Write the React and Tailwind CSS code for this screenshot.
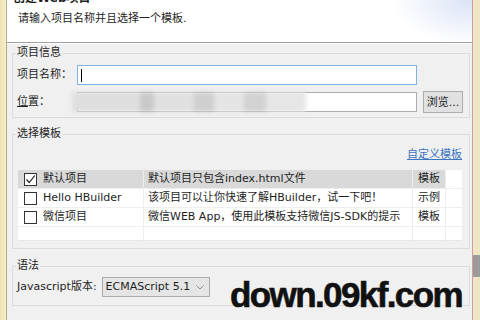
import React from "react";

const rows = [
  { checked: true, name: "默认项目", desc: "默认项目只包含index.html文件", type: "模板", selected: true },
  { checked: false, name: "Hello HBuilder", desc: "该项目可以让你快速了解HBuilder，试一下吧！", type: "示例" },
  { checked: false, name: "微信项目", desc: "微信WEB App，使用此模板支持微信JS-SDK的提示", type: "模板" },
];

const Checkbox = ({ checked }) => (
  <span className="w-[13px] h-[13px] border border-[#333] bg-white flex items-center justify-center shrink-0">
    {checked && (
      <svg width="11" height="11" viewBox="0 0 11 11">
        <path d="M1.5 5.5 L4.2 8.5 L9.8 1.5" fill="none" stroke="#222" strokeWidth="1.2" />
      </svg>
    )}
  </span>
);

const Group = ({ title, className = "", children }) => (
  <fieldset className={`border border-[#dcdcdc] mx-[5px] mr-[2px] ${className}`}>
    <legend className="ml-[3px] px-[1px] leading-[16px] text-[#1e1e1e]">{title}</legend>
    {children}
  </fieldset>
);

export default function App() {
  return (
    <div className="w-[480px] h-[320px] overflow-hidden relative flex bg-[#f0e6bf] text-[11px] text-[#1e1e1e] font-['DejaVu_Sans','Noto_Sans_CJK_SC',sans-serif]">
      {/* left window edge */}
      <div className="w-[7px] bg-[linear-gradient(to_right,#efe2ae,#f6efd2)] border-r border-[#b9ab86]" />

      {/* dialog */}
      <div className="w-[466px] flex flex-col bg-[#f0f0f0] border-r border-[#d39b9b]">
        <div className="h-[43px] shrink-0 bg-[radial-gradient(ellipse_80px_45px_at_100%_0%,#d9e2f6,#ffffff)] border-b border-[#a0a0a0]">
          <div className="mt-[-10px] ml-[6px] font-bold text-[12px] leading-[16px]">创建Web项目</div>
          <div className="mt-[5px] ml-[11px] leading-[16px]">请输入项目名称并且选择一个模板.</div>
        </div>
        <div className="h-px bg-white" />

        <Group title="项目信息" className="mt-[1px] pb-[4px]">
          <div className="grid grid-cols-[54px_340px_40px] gap-x-[6px] pl-[4px] items-center">
            <span className="mt-[4px] whitespace-nowrap">项目名称：</span>
            <div className="mt-[4px] h-[20px] bg-white border border-[#7db2e6] flex items-center pl-[3px]">
              <span className="w-px h-[13px] bg-black" />
            </div>
            <span />
            <span className="mt-[6px] whitespace-nowrap">
              <span className="underline">位</span>置：
            </span>
            <div className="mt-[6px] h-[20px] bg-white border border-[#acacac] flex items-center">
              <div className="relative -ml-[6px] w-[234px] h-[20px] flex blur-[2px]">
                <span className="flex-1 bg-[#dedede]" />
                <span className="w-[14px] bg-[#c9c9c9]" />
                <span className="w-[40px] bg-[#e0e0e0]" />
                <span className="w-[20px] bg-[#cfcfcf]" />
                <span className="w-[30px] bg-[#e4e4e4]" />
                <span className="w-[22px] bg-[#d2d2d2]" />
                <span className="w-[40px] bg-[#e6e6e6]" />
              </div>
            </div>
            <button className="mt-[6px] h-[22px] bg-[#e1e1e1] border border-[#adadad] text-[11px] leading-none">浏览...</button>
          </div>
        </Group>

        <Group title="选择模板" className="mt-[8px] pb-[7px]">
          <div className="mt-[6px] pr-[7px] flex justify-end leading-[14px]">
            <span className="text-[#3d75c0] underline">自定义模板</span>
          </div>
          <div className="mt-[8px] ml-[5px] mr-[7px] h-[71px] bg-white grid grid-cols-[126px_269px_33px_1fr] auto-rows-[19px] border-b border-[#e6e6e6]">
            {rows.map((r) => (
              <React.Fragment key={r.name}>
                <div className={`flex items-center gap-[6px] pl-[6px] border-r border-b border-[#eeeeee] ${r.selected ? "bg-[#d9d9d9]" : ""}`}>
                  <Checkbox checked={r.checked} />
                  <span>{r.name}</span>
                </div>
                <div className={`flex items-center pl-[4px] border-r border-b border-[#eeeeee] whitespace-nowrap ${r.selected ? "bg-[#d9d9d9]" : ""}`}>
                  {r.desc}
                </div>
                <div className={`flex items-center pl-[5px] border-r border-b border-[#eeeeee] ${r.selected ? "bg-[#d9d9d9]" : ""}`}>
                  {r.type}
                </div>
                <div className="border-b border-[#eeeeee]" />
              </React.Fragment>
            ))}
            <div className="border-r border-[#eeeeee]" />
            <div className="border-r border-[#eeeeee]" />
            <div className="border-r border-[#eeeeee]" />
            <div />
          </div>
        </Group>

        <Group title="语法" className="mt-[9px] pb-[8px]">
          <div className="mt-[3px] pl-[4px] flex items-center gap-[5px]">
            <span>Javascript版本:</span>
            <div className="w-[108px] h-[20px] bg-[#e5e5e5] border border-[#acacac] flex items-center justify-between pl-[3px] pr-[5px] text-[11px]">
              <span>ECMAScript 5.1</span>
              <svg width="8" height="5" viewBox="0 0 8 5">
                <path d="M0.5 0.5 L4 4 L7.5 0.5" fill="none" stroke="#8a8a8a" strokeWidth="1" />
              </svg>
            </div>
          </div>
        </Group>
      </div>

      {/* right window edge */}
      <div className="flex-1 flex flex-col bg-[#eee6c4]">
        <div className="mt-[255px] h-[22px] bg-[#9b9b9b]" />
      </div>

      {/* watermark */}
      <div className="absolute left-[230px] top-[277px] text-[35px] leading-[35px] font-bold tracking-[-1.6px] text-[#111] font-['Liberation_Sans',sans-serif] [-webkit-text-stroke:0.6px_#111]">
        down.09kf.com
      </div>
    </div>
  );
}
